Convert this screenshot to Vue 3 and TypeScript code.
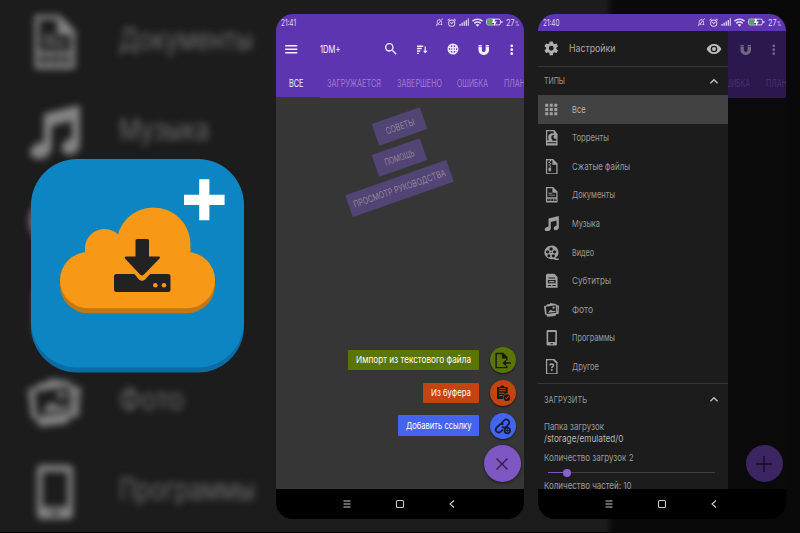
<script setup lang="ts">
import { h, type FunctionalComponent } from 'vue'

// Narrow label: one line of text fitted to a fixed advance width.
const Fit: FunctionalComponent<{ t: string; w: number; s?: number }> = (props) => {
  const size = props.s ?? 10
  return h('svg', { width: props.w, height: size * 1.4, class: 'fit', lang: 'ru' }, [
    h('text', {
      x: 0,
      y: size * 1.04,
      'font-size': size,
      textLength: props.w,
      lengthAdjust: 'spacingAndGlyphs',
      fill: 'currentColor',
    }, props.t),
  ])
}
Fit.props = ['t', 'w', 's']

const paths: Record<string, string> = {
  menu: 'M2 5h20v2.4H2zM2 10.8h20v2.4H2zM2 16.6h20v2.4H2z',
  search: 'M15.5 14h-.79l-.28-.27A6.47 6.47 0 0 0 16 9.5 6.5 6.5 0 1 0 9.5 16c1.61 0 3.09-.59 4.23-1.57l.27.28v.79l5 4.99L20.49 19zm-6 0a4.5 4.5 0 1 1 0-9 4.5 4.5 0 0 1 0 9z',
  sort: 'M2 3h13v3H2zM2 8h10v3H2zM2 13h7v3H2zM2 18h4v3H2zM18 5h2.500v9H24l-4.700 6-4.700-6H18z',
  globe: 'M12 1a11 11 0 1 0 0 22 11 11 0 0 0 0-22zM10.500 4v4H7c.700-2 2-3.600 3.500-4zm3 0c1.500.400 2.800 2 3.500 4h-3.500zM5.800 6.200 5 8H4.300zM18.200 6.200 19.700 8H19zM3.500 10.500h3v3h-3zm5 0h2v3h-2zm5 0h2v3h-2zm4.500 0h2.500v3H18zM4.300 16H5l.800 1.800zM7 16h3.500v4C9 19.500 7.700 18 7 16zm6.500 0H17c-.700 2-2 3.500-3.500 4zm5.500 0h.700l-1.500 1.800z',
  magnet: 'M1 2h7v3H1zM16 2h7v3h-7zM1 6.500h7v6a4 4 0 0 0 8 0v-6h7v6a11 10.500 0 0 1-22 0z',
  more: 'M12 2.500a2.500 2.500 0 1 1 0 5 2.500 2.500 0 0 1 0-5zm0 7a2.500 2.500 0 1 1 0 5 2.500 2.500 0 0 1 0-5zm0 7a2.500 2.500 0 1 1 0 5 2.500 2.500 0 0 1 0-5z',
  gear: 'M19.43 12.98c.04-.32.07-.64.07-.98s-.03-.66-.07-.98l2.11-1.65c.19-.15.24-.42.12-.64l-2-3.46c-.12-.22-.39-.3-.61-.22l-2.49 1c-.52-.4-1.080-.73-1.690-.98l-.38-2.650C14.460 2.180 14.250 2 14 2h-4c-.25 0-.46.18-.49.42l-.38 2.650c-.61.25-1.170.59-1.690.98l-2.490-1c-.23-.09-.49 0-.61.22l-2 3.460c-.13.22-.07.49.12.64l2.110 1.650c-.04.32-.07.65-.07.98s.03.66.07.98l-2.110 1.650c-.19.15-.24.42-.12.64l2 3.460c.12.22.39.3.61.22l2.490-1c.52.4 1.080.73 1.690.98l.38 2.650c.03.24.24.42.49.42h4c.25 0 .46-.18.49-.42l.38-2.650c.61-.25 1.170-.59 1.690-.98l2.490 1c.23.09.49 0 .61-.22l2-3.460c.12-.22.07-.49-.12-.64zM12 15.500a3.500 3.500 0 1 1 0-7 3.500 3.500 0 0 1 0 7z',
  eye: 'M12 4.500C7 4.500 2.730 7.610 1 12c1.730 4.390 6 7.500 11 7.500s9.270-3.110 11-7.500c-1.730-4.390-6-7.500-11-7.500zM12 17a5 5 0 1 1 0-10 5 5 0 0 1 0 10zm0-8a3 3 0 1 0 0 6 3 3 0 0 0 0-6z',
  up: 'm12 8-7 7 1.800 1.800 5.200-5.200 5.200 5.200L19 15z',
  grid: 'M2 3h5v5H2zM9.500 3h5v5h-5zM17 3h5v5h-5zM2 10h5v5H2zM9.500 10h5v5h-5zM17 10h5v5h-5zM2 17h5v5H2zM9.500 17h5v5h-5zM17 17h5v5h-5z',
  torrent: 'M3 0h13l5 6v18H3zM5 2v14h2.500C4.500 8 9 4 15.500 5.500L14.500 2zM16.500 8c-5-1.500-7 3.500-3 8.500h5.500V13c-3 2-6-1-3.500-4zM5 19v1.500h14V19z',
  zip: 'M3 0h11l7 7v17H3zM5 2v20h14V9h-6V2h-2v2H9V2zM7 4h2v2H7zm2 2h2v2H9zM7 8h2v2H7zm2 2h2v2H9zM7 13h4v6H7z',
  doc: 'M3 0h11l7 7v17H3zM5 2v14h14V9h-6V2zM7 9h5v1.300H7zm0 3h10v1.300H7zM5 18v3.500h4V18zm1.300 1.200h1.400v1.200H6.300zM10 18v3.500h4V18zm1.300 1.200h1.400v1.200h-1.400zM15 18v3.500h4.500v-1.100h-3.200v-1.200h3.200V18z',
  music: 'M7 4 23 0v17.500c0 2.500-2 4.500-4.500 4.500S15 20.700 15 19c0-2 2-4 4.500-4V7L10.500 9.300V19c0 2.500-2.500 5-5.500 5-2.300 0-4-1.300-4-3 0-2.300 2.500-4.500 6-4.500z',
  film: 'M11 1a10.500 10.500 0 1 0 3 20.600c2.500 1.400 5 1.800 9.500 1.400v-2c-2.500.200-4.500 0-6-.700A10.500 10.500 0 0 0 11 1zm0 2.500a2.700 2.700 0 1 1 0 5.400 2.700 2.700 0 0 1 0-5.400zM5.600 8a2.600 2.600 0 1 1 0 5.200A2.600 2.600 0 0 1 5.600 8zm10.800 0a2.600 2.600 0 1 1 0 5.200 2.600 2.600 0 0 1 0-5.200zM7.600 14.300a2.500 2.500 0 1 1 0 5 2.500 2.500 0 0 1 0-5zm6.900 0a2.500 2.500 0 1 1 0 5 2.500 2.500 0 0 1 0-5zM11 10.500a1 1 0 1 0 0 2 1 1 0 0 0 0-2z',
  subs: 'M5 1h11l5 5v17H3V3zM7 7v1.500h10V7zM6 11v5h12v-5zm2 1.500h8v2H8zM6 18.500V20h5v-1.500zm7 0V20h5v-1.500z',
  photo: 'M4 4 9 3l.500-1.500L19 3l.500 2 4 .500-1 13-4 .500-1 2.500L5 23l-1-3-2.500-1L0 6l4-.500zM3 7.500l1 11 15-2-1-11.500zM6 16.500l4-4.500 4 2 3.500-.500.500 2zM13 7.500l3-.500.500 3-3 .500zM20.500 8l.500 8.500.500-8.500z',
  phone: 'M6 0h12a2 2 0 0 1 2 2v20a2 2 0 0 1-2 2H6a2 2 0 0 1-2-2V2c0-1.100.9-2 2-2zm.500 3v15.500h11V3zM10 20.500V22h4v-1.500z',
  other: 'M3 0h13l5 5v19H3zM5 2v20h14V7l-5-5zM8 9.500C8 7.500 9.500 6.500 12 6.500s4 1.200 4 3.200c0 2.300-2.700 2.700-2.700 4.800h-2.600c0-3 2.600-3.200 2.600-4.600 0-1.500-2.600-1.400-2.600.1zM10.700 16h2.600v2.500h-2.600z',
  mute: 'M5 17V11c0-4 2.500-6.500 6-7V2h2v2c3.500.5 6 3 6 7v6l2 2v1H3v-1zM7 18h10v-7c0-6-10-6-10 0zM3 22 21 1l1.500 1.200L4.500 23.500z',
  alarm: 'M12 4a9 9 0 1 0 0 18 9 9 0 0 0 0-18zm0 2.300a6.700 6.700 0 1 1 0 13.400 6.700 6.700 0 0 1 0-13.400zM1 5l5-4 1.400 1.700-5 4zM23 5l-5-4-1.400 1.700 5 4zM7.500 11l1.500-1.500 3 3 3.500-3.500L17 10.500 12 15.500z',
  signal: 'M1 17h3v4H1zM6 14h3v7H6zM11 11h3v10h-3zM16 7h3v14h-3zM21 3h2.500v18H21z',
  wifi: 'M0 8C7 1.500 17 1.500 24 8l-2.200 2.300C16 5 8 5 2.200 10.300zM4 12.500c4.700-4.300 11.300-4.300 16 0L17.800 15c-3.500-3-8-3-11.600 0zM8 17c2.500-2 5.500-2 8 0l-4 4.500z',
  fileIn: 'M2 1h11l6 6v5h-2V9h-6V3H4v18h13v-2h2v4H2zM24 14.500v2h-7V20l-5-4.500 5-4.500v3.500z',
  clip: 'M3 3h5c0-3 6-3 6 0h5v9.500a6 6 0 0 0-6.500 8.500H3zm3 5v1.500h10V8zm0 3.500V13h8v-1.500zM6 15v1.500h5V15zM6 5v1h10V5zM18 14a5 5 0 1 1 0 10 5 5 0 0 1 0-10zm-1 7.500 4-4-1-1-3 3-1.300-1.300-1 1z',
}

const Icon: FunctionalComponent<{ n: string; s?: number }> = (props) =>
  h('svg', { width: props.s ?? 15, height: props.s ?? 15, viewBox: '0 0 24 24', class: 'ico' }, [
    h('path', { d: paths[props.n], fill: 'currentColor', 'fill-rule': 'evenodd' }),
  ])
Icon.props = ['n', 's']

const backdrop = [
  { icon: 'doc', t: 'Документы', w: 134 },
  { icon: 'music', t: 'Музыка', w: 90 },
  { icon: 'film', t: '', w: 1 },
  { icon: 'subs', t: '', w: 1 },
  { icon: 'photo', t: 'Фото', w: 65 },
  { icon: 'phone', t: 'Программы', w: 136 },
]

const types = [
  { icon: 'grid', t: 'Все', w: 13.5 },
  { icon: 'torrent', t: 'Торренты', w: 37 },
  { icon: 'zip', t: 'Сжатые файлы', w: 58 },
  { icon: 'doc', t: 'Документы', w: 43 },
  { icon: 'music', t: 'Музыка', w: 28 },
  { icon: 'film', t: 'Видео', w: 22 },
  { icon: 'subs', t: 'Субтитры', w: 39 },
  { icon: 'photo', t: 'Фото', w: 21 },
  { icon: 'phone', t: 'Программы', w: 43 },
  { icon: 'other', t: 'Другое', w: 27 },
]

const tabs = [
  { t: 'ВСЕ', w: 14.5 },
  { t: 'ЗАГРУЖАЕТСЯ', w: 54 },
  { t: 'ЗАВЕРШЕНО', w: 45 },
  { t: 'ОШИБКА', w: 31 },
  { t: 'ПЛАН', w: 21 },
]

const phones = [
  { id: 'downloads', time: '21:41' },
  { id: 'drawer', time: '21:40' },
]
</script>

<template>
  <main class="stage">
    <section class="promo">
      <div class="backdrop">
        <div v-for="b in backdrop" :key="b.icon" class="brow">
          <span class="bicon"><Icon :n="b.icon" :s="54" /></span>
          <Fit v-if="b.t" :t="b.t" :w="b.w" :s="30" />
        </div>
      </div>
      <svg class="logo" viewBox="31 159 213 214" width="213" height="214">
        <rect x="31" y="163" width="213" height="209.500" rx="46" fill="#0b6ba2" />
        <rect x="31" y="159" width="213" height="208.500" rx="46" fill="#0d85c3" />
        <path d="M199.200 179.300h10.200v15.400h15.200v10.200h-15.200v15.300h-10.200v-15.300H184v-10.200h15.200z" fill="#fff" />
        <rect x="60" y="257" width="155" height="56.300" rx="28" fill="#c27812" />
        <g fill="#f79817">
          <rect x="60" y="252" width="155" height="56.300" rx="28" />
          <circle cx="104.500" cy="248.500" r="19.600" />
          <rect x="85" y="248" width="105.500" height="40" />
          <circle cx="153.500" cy="244.500" r="37" />
        </g>
        <rect x="114" y="274" width="56.500" height="18" rx="2.500" fill="#222" />
        <path d="M131 270l8 9.500q3 2.500 6 0L154 270z" fill="#f79817" />
        <path d="M137 239h10.500q1.500 0 1.500 1.500V256.500h9.500q2.500 0 1 2L144 274.500q-2 2-4 0L125 258.500q-1-2 1.500-2h9v-16q0-1.500 1.500-1.500z" fill="#222" />
        <circle cx="155.300" cy="285.200" r="2.300" fill="#f79817" />
        <circle cx="164" cy="285.200" r="2.300" fill="#f79817" />
      </svg>
    </section>

    <article v-for="p in phones" :key="p.id" class="phone" :class="p.id">
      <div class="status">
        <Fit :t="p.time" :w="p.id === 'drawer' ? 16.500 : 15" :s="8.500" />
        <div class="sicons">
          <Icon n="mute" :s="8.500" />
          <Icon n="alarm" :s="9.500" />
          <Icon n="signal" :s="10" />
          <Icon n="wifi" :s="11" />
          <svg class="ico" width="17" height="8" viewBox="0 0 17 8">
            <rect x=".6" y="1.100" width="13.800" height="5.800" rx="1.500" fill="none" stroke="#ded6ee" />
            <rect x="1" y="1.500" width="5" height="5" fill="#55a64a" />
            <path d="M7 1h2L8.500 3.500H11L8 7.500V5H6z" fill="#fff" /><rect x="15.300" y="3" width="1.200" height="2" fill="#ded6ee" />
          </svg>
          <span class="pct"><Fit t="27" :w="8.500" :s="8.500" /><Fit t="%" :w="4" :s="5.500" /></span>
        </div>
      </div>
      <div class="screen">
        <div class="under">
          <div class="appbar">
            <div class="tools">
              <span class="cell burger"><Icon n="menu" :s="14.500" /></span>
              <span class="title"><Fit t="1DM+" :w="20.500" :s="11" /></span>
              <span class="cell"><Icon n="search" :s="16" /></span>
              <span class="cell"><Icon n="sort" :s="11.500" /></span>
              <span class="cell"><Icon n="globe" :s="12" /></span>
              <span class="cell"><Icon n="magnet" :s="11.500" /></span>
              <span class="cell last"><Icon n="more" :s="13.500" /></span>
            </div>
            <div class="tabs"><Fit v-for="t in tabs" :key="t.t" :t="t.t" :w="t.w" :s="10" /></div>
            <div class="mark"></div>
          </div>
          <div v-if="p.id === 'downloads'" class="content">
            <div class="tips">
              <span class="tip"><Fit t="СОВЕТЫ" :w="30" :s="9.500" /></span>
              <span class="tip"><Fit t="ПОМОЩЬ" :w="31" :s="9.500" /></span>
              <span class="tip wide"><Fit t="ПРОСМОТР РУКОВОДСТВА" :w="97" :s="9.500" /></span>
            </div>
            <div class="actions">
              <div class="act green">
                <span class="lab"><Fit t="Импорт из текстового файла" :w="115" :s="9.500" /></span>
                <span class="dot"><Icon n="fileIn" :s="17" /></span>
              </div>
              <div class="act orange">
                <span class="lab"><Fit t="Из буфера" :w="40" :s="9.500" /></span>
                <span class="dot"><Icon n="clip" :s="16" /></span>
              </div>
              <div class="act blue">
                <span class="lab"><Fit t="Добавить ссылку" :w="65.500" :s="9.500" /></span>
                <span class="dot">
                  <svg width="18" height="18" viewBox="0 0 18 18" fill="none" stroke="#101a3c" stroke-width="1.700">
                    <path d="M7.500 6.500 10 3.500q2-2 4.200-.3 2 2 .3 4.200L12 10q-2 1.500-4-.3M9.500 7.500q-2-1.500-4 .3L2.500 10.500Q.8 13 2.600 14.600q2.200 1.800 4.200 0L9 12.500" />
                    <circle cx="13.300" cy="13.500" r="2.800" /><path d="M13.300 11.500v4M11.300 13.500h4" stroke-width="1" />
                  </svg>
                </span>
              </div>
            </div>
          </div>
          <div class="fab">
            <svg width="18" height="18" viewBox="0 0 18 18" fill="none" stroke="currentColor" stroke-width="1.300">
              <path :d="p.id === 'drawer' ? 'M9 1v16M1 9h16' : 'M3.500 3.500l11 11M14.500 3.500l-11 11'" />
            </svg>
          </div>
        </div>
        <aside v-if="p.id === 'drawer'" class="side">
          <div class="settings">
            <span class="ic"><Icon n="gear" :s="16.500" /></span>
            <Fit t="Настройки" :w="46.500" :s="10.500" />
            <span class="end"><Icon n="eye" :s="16" /></span>
          </div>
          <div class="group"><Fit t="ТИПЫ" :w="21" :s="9.500" /><span class="end"><Icon n="up" :s="14" /></span></div>
          <div v-for="t in types" :key="t.t" class="item" :class="{ on: t.icon === 'grid' }">
            <span class="ic"><Icon :n="t.icon" :s="t.icon === 'grid' ? 14.500 : 15.500" /></span>
            <Fit :t="t.t" :w="t.w" :s="9.500" />
          </div>
          <div class="group load"><Fit t="ЗАГРУЗИТЬ" :w="43" :s="9.500" /><span class="end"><Icon n="up" :s="14" /></span></div>
          <div class="prefs">
            <Fit t="Папка загрузок" :w="60" :s="9.500" />
            <Fit class="path" t="/storage/emulated/0" :w="79.500" :s="9.500" />
            <Fit class="count" t="Количество загрузок 2" :w="89.500" :s="9.500" />
            <div class="slider"><i></i></div>
            <Fit t="Количество частей: 10" :w="87.500" :s="9.500" />
          </div>
        </aside>
      </div>
      <nav class="nav">
        <svg width="10" height="10" viewBox="0 0 10 10"><path d="M1.500 2h7M1.500 5h7M1.500 8h7" /></svg>
        <svg width="10" height="10" viewBox="0 0 10 10"><rect x="1.500" y="1.500" width="7" height="7" rx="1.300" /></svg>
        <svg width="10" height="10" viewBox="0 0 10 10"><path d="M7 1.500 3 5l4 3.500" /></svg>
      </nav>
    </article>
  </main>
</template>

<style>
body { margin: 0; background: #1c1c1c; overflow: hidden; }
.fit { display: block; flex: none; overflow: visible; font-family: Inter, Roboto, "Liberation Sans", sans-serif; }
.ico { display: block; flex: none; }
</style>

<style scoped>
.stage { width: 800px; height: 533px; box-sizing: border-box; display: flex; align-items: flex-start; overflow: hidden; padding-top: 14px; background: linear-gradient(90deg, #1c1c1c 605px, #090909 614px); border-bottom: 1px solid #080808; }
.promo { width: 275.500px; height: 505px; flex: none; display: grid; }
.promo > * { grid-area: 1 / 1; }
.backdrop { margin-top: -17px; filter: blur(3.500px); height: 540px; }
.brow { height: 90px; display: flex; align-items: center; }
.bicon { width: 64px; padding-left: 28px; margin-right: 27px; color: #858585; }
.brow .fit { margin-top: -4px; color: #6c6c6c; }
.logo { margin: 145px 0 0 31px; z-index: 1; }
.phone { width: 248px; height: 505px; flex: none; border-radius: 17px; overflow: hidden; display: flex; flex-direction: column; background: #000; }
.phone + .phone { margin-left: 14px; }
.status { height: 17px; flex: none; display: flex; justify-content: space-between; align-items: center; padding: 0 4.500px 0 5.500px; background: #5e35b1; color: #e3dcf1; }
.sicons { display: flex; align-items: center; gap: 3px; }
.pct { display: flex; align-items: center; gap: .5px; }
.pct > :last-child { margin-top: 2px; }
.screen { height: 458px; display: grid; flex: none; overflow: hidden; }
.screen > * { grid-area: 1 / 1; }
.under { display: flex; flex-direction: column; background: #363636; min-width: 0; height: 458px; position: relative; }
.appbar { height: 67px; background: #5e35b1; color: #f5f1fb; flex: none; }
.tools { height: 36.500px; display: flex; align-items: center; }
.cell { width: 31px; display: flex; justify-content: center; flex: none; }
.burger { width: 31px; }
.title { width: 56px; padding-left: 13px; }
.last { width: 24px; }
.tabs { height: 29px; box-sizing: border-box; display: flex; align-items: center; gap: 15.500px; padding: 4px 0 0 13.500px; overflow: hidden; color: #9a80cf; }
.tabs > :first-child { color: #f5f1fb; margin-right: 8px; }
.mark { height: 1.500px; width: 44px; background: #512a33; }
.content { display: flex; flex-direction: column; justify-content: space-between; flex: 1; }
.tips { display: flex; flex-direction: column; align-items: center; gap: 8px; padding: 17px 1px 0 0; }
.tip { width: 51px; height: 23px; display: flex; align-items: center; justify-content: center; background: #524475; color: #918899; transform: rotate(-19.200deg); border-radius: 1px; }
.wide { width: 107px; }
.actions { display: flex; flex-direction: column; gap: 6.700px; align-items: flex-end; padding: 0 8px 50.500px 0; }
.act { display: flex; align-items: center; gap: 10.500px; }
.lab { height: 20.500px; padding: 0 8px; display: flex; align-items: center; color: #fff; border-radius: 1px; background: var(--c); }
.dot { width: 26px; height: 26px; border-radius: 50%; display: flex; align-items: center; justify-content: center; background: var(--c); box-shadow: 0 1px 2px #0008; color: #171b0b; }
.green { --c: #5b7504; }
.orange { --c: #c34410; }
.blue { --c: #4464ee; }
.fab { position: absolute; right: 3px; bottom: 7px; width: 37px; height: 37px; border-radius: 50%; background: #7e57c2; color: #2b1e43; display: flex; align-items: center; justify-content: center; box-shadow: 0 1px 3px #0008; }
.drawer .under { background: #0a0a0a; }
.drawer .appbar { background: #2a184f; color: #6f667f; }
.drawer .tabs { color: #49346f; }
.drawer .mark { background: none; }
.drawer .fab { background: #3b2661; color: #140d20; box-shadow: none; }
.side { width: 190.500px; height: 458px; background: #1c1c1c; color: #9a9a9a; position: relative; overflow: hidden; }
.settings { height: 35px; display: flex; align-items: center; border-bottom: 1px solid #363636; color: #aaa; }
.ic { width: 28px; display: flex; justify-content: center; margin-right: 6.500px; color: #b0b0b0; flex: none; }
.settings .ic { margin-right: 3.500px; }
.end { margin-left: auto; width: 29px; display: flex; justify-content: center; color: #bdbdbd; }
.group { height: 28px; display: flex; align-items: center; padding-left: 6.500px; }
.item { height: 28.600px; display: flex; align-items: center; }
.item .ic { color: #a0a0a0; }
.on { background: #424242; color: #b5b5b5; }
.load { height: 30px; border-top: 1px solid #363636; margin-top: 2.500px; }
.prefs { padding: 6px 0 0 6.500px; }
.path { margin-top: -2px; color: #b5b5b5; }
.count { margin-top: 6px; }
.slider { width: 167px; height: 1px; margin: 8px 0 6px 4px; background: linear-gradient(90deg, #7e57c2 19px, #404040 19px); display: flex; align-items: center; }
.slider i { width: 8px; height: 8px; border-radius: 50%; background: #8a60d0; margin-left: 15px; flex: none; }
.nav { flex: 1; display: flex; justify-content: center; align-items: center; gap: 42.500px; background: #000; }
.nav svg { fill: none; stroke: #ccc; stroke-width: 1.100; }
</style>
